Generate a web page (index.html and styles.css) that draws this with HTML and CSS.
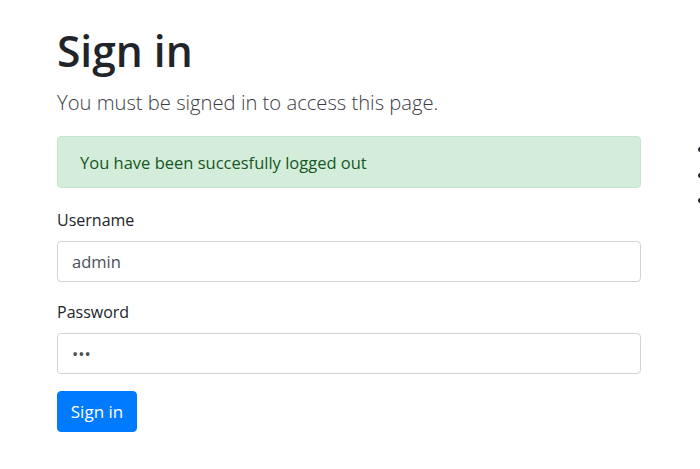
FILE: index.html
```html
<!DOCTYPE html>
<html lang="en">
<head>
<meta charset="utf-8">
<title>Sign in</title>
<link rel="stylesheet" href="styles.css">
</head>
<body>
<div class="page">
  <main class="main">
    <h1 class="title">Sign in</h1>
    <p class="lead">You must be signed in to access this page.</p>
    <div class="alert">You have been succesfully logged out</div>
    <form class="form">
      <div class="group">
        <label class="label" for="username">Username</label>
        <input class="input" id="username" type="text" value="admin">
      </div>
      <div class="group">
        <label class="label" for="password">Password</label>
        <input class="input" id="password" type="password" value="abc">
      </div>
      <button class="btn" type="button">Sign in</button>
    </form>
  </main>
  <aside class="side">
    <ul class="links">
      <li class="dot"></li>
      <li class="dot"></li>
      <li class="dot"></li>
    </ul>
  </aside>
</div>
</body>
</html>
```
FILE: styles.css
```css
html, body {
  margin: 0;
  padding: 0;
  background: #fff;
  overflow: hidden;
}
body {
  font-family: "Open Sans", "Noto Sans", sans-serif;
  color: #212529;
  font-size: 16px;
}
.page {
  display: flex;
  padding: 25px 0 0 57px;
}
.main {
  width: 584px;
  flex: none;
}
.title {
  font-size: 42.5px;
  font-weight: 600;
  line-height: 52px;
  margin: 0;
}
.lead {
  font-size: 20.2px;
  font-weight: 300;
  line-height: 30px;
  margin: 10px 0 0;
  color: #3c3c44;
}
.alert {
  margin-top: 19px;
  height: 52px;
  box-sizing: border-box;
  padding: 0 22px;
  display: flex;
  align-items: center;
  background: #d4edda;
  border: 1px solid #c3e6cb;
  border-radius: 4px;
  color: #155724;
  font-size: 16.5px;
}
.form {
  margin-top: 20px;
}
.group {
  margin-bottom: 18px;
}
.group + .group {
  margin-bottom: 17px;
}
.label {
  display: block;
  font-size: 16px;
  line-height: 24px;
  margin-bottom: 9px;
}
.input {
  display: block;
  width: 100%;
  height: 41px;
  box-sizing: border-box;
  padding: 0 14px;
  border: 1px solid #ced4da;
  border-radius: 4px;
  font-family: inherit;
  font-size: 16.5px;
  color: #495057;
  background: #fff;
}
.btn {
  display: block;
  height: 41px;
  width: 80px;
  padding: 0;
  border: 1px solid #007bff;
  border-radius: 4px;
  background: #007bff;
  color: #fff;
  font-family: inherit;
  font-size: 17px;
}
.side {
  flex: none;
  padding-left: 57px;
}
.links {
  list-style: none;
  margin: 122px 0 0;
  padding: 0;
}
.dot {
  width: 5px;
  height: 5px;
  border-radius: 50%;
  background: #212529;
  margin-bottom: 20.5px;
}
```
